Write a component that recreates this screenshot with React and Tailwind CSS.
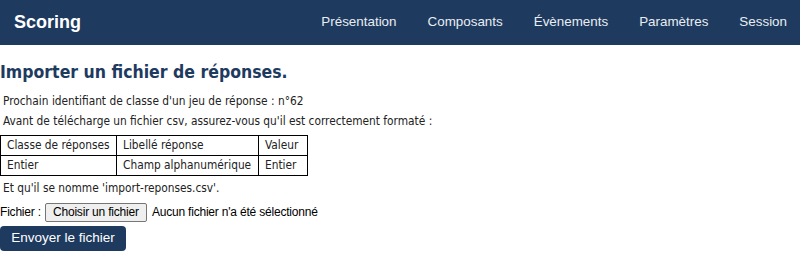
const body = "[font-family:'DejaVu_Sans_Condensed','DejaVu_Sans',sans-serif] [font-stretch:condensed]";
const arial = "[font-family:'Liberation_Sans',Arial,sans-serif]";

const links = ["Présentation", "Composants", "Évènements", "Paramètres", "Session"];

export default function App() {
  return (
    <div className="min-h-[259px] bg-white text-[#222]">
      {/* NAVBAR */}
      <nav className={`h-[45px] bg-[#1e3a5f] flex items-center justify-between pl-[14px] pr-[13px] ${arial}`}>
        <span className="text-white font-bold text-[18px]">Scoring</span>
        <ul className="flex items-center gap-[31px] text-[13.4px] text-[#e9edf2]">
          {links.map((l) => (
            <li key={l}>{l}</li>
          ))}
        </ul>
      </nav>

      <main className={`${body} text-[11.8px]`}>
        <h1 className="text-[17.5px] font-bold text-[#1e3a5f] mt-[16px] leading-[22px]">
          Importer un fichier de réponses.
        </h1>

        <p className="pl-[3px] mt-[8px] leading-[20px]">Prochain identifiant de classe d'un jeu de réponse : n°62</p>
        <p className="pl-[3px] leading-[20px]">Avant de télécharge un fichier csv, assurez-vous qu'il est correctement formaté :</p>

        <table className="mt-[4px] border-collapse border border-black whitespace-nowrap">
          <tbody>
            <tr className="h-[20px]">
              <td className="border border-black px-[6px] w-[116px]">Classe de réponses</td>
              <td className="border border-black px-[6px] w-[142px]">Libellé réponse</td>
              <td className="border border-black px-[6px] w-[49px]">Valeur</td>
            </tr>
            <tr className="h-[20px]">
              <td className="border border-black px-[6px]">Entier</td>
              <td className="border border-black px-[6px]">Champ alphanumérique</td>
              <td className="border border-black px-[6px]">Entier</td>
            </tr>
          </tbody>
        </table>

        <p className="pl-[3px] mt-[2px] leading-[20px]">Et qu'il se nomme 'import-reponses.csv'.</p>

        <div className={`mt-[3px] flex items-center h-[22px] ${arial} text-[12px] tracking-[-0.2px] text-black`}>
          <span>Fichier :</span>
          <span className="ml-[4px] h-[19px] w-[102px] flex items-center justify-center bg-[#efefef] border border-[#767676] rounded-[2px]">
            Choisir un fichier
          </span>
          <span className="ml-[5px]">Aucun fichier n'a été sélectionné</span>
        </div>

        <button className={`mt-[3px] h-[25px] w-[126px] rounded-[4px] bg-[#1e3a5f] text-white text-[13.5px] ${arial}`}>
          Envoyer le fichier
        </button>
      </main>
    </div>
  );
}
